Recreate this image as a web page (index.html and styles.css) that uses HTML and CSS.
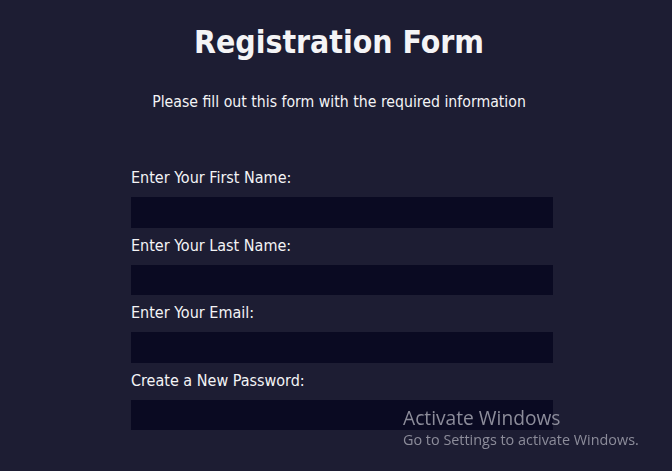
FILE: index.html
```html
<!DOCTYPE html>
<html lang="en">
<head>
<meta charset="utf-8">
<title>Registration Form</title>
<link rel="stylesheet" href="styles.css">
</head>
<body>
<main class="page">
  <h1 class="title">Registration Form</h1>
  <p class="subtitle">Please fill out this form with the required information</p>
  <form class="form">
    <label class="field">
      <span class="label">Enter Your First Name:</span>
      <input class="input" type="text">
    </label>
    <label class="field">
      <span class="label">Enter Your Last Name:</span>
      <input class="input" type="text">
    </label>
    <label class="field">
      <span class="label">Enter Your Email:</span>
      <input class="input" type="email">
    </label>
    <label class="field">
      <span class="label">Create a New Password:</span>
      <input class="input" type="password">
    </label>
  </form>
</main>
<div class="watermark">
  <div class="wm-title">Activate Windows</div>
  <div class="wm-sub">Go to Settings to activate Windows.</div>
</div>
</body>
</html>
```

FILE: styles.css
```css
html, body {
  margin: 0;
  padding: 0;
  background: #1d1d33;
  height: 100%;
  overflow: hidden;
}
body {
  font-family: "DejaVu Sans Condensed", "DejaVu Sans", sans-serif;
  color: #f4f4f6;
}
.page {
  display: flex;
  flex-direction: column;
  align-items: center;
  padding-left: 12px;
}
.title {
  margin: 22px 6px 0 0;
  font-size: 31.7px;
  font-weight: bold;
  line-height: 40px;
}
.subtitle {
  margin: 30px 6px 0 0;
  font-size: 15.7px;
  line-height: 20px;
}
.form {
  width: 422px;
  margin-top: 56px;
  display: flex;
  flex-direction: column;
  gap: 8px;
}
.field {
  display: flex;
  flex-direction: column;
  gap: 9px;
}
.label {
  font-size: 16px;
  line-height: 20px;
}
.input {
  display: block;
  box-sizing: border-box;
  width: 100%;
  height: 30.5px;
  margin: 0;
  border: none;
  background: #0a0a22;
  color: #fff;
  padding: 0 8px;
}
.watermark {
  position: fixed;
  left: 403px;
  top: 405px;
  font-family: "Open Sans", "Noto Sans", sans-serif;
  color: #8c8c9a;
}
.wm-title {
  font-size: 19.2px;
  line-height: 25px;
}
.wm-sub {
  font-size: 14.4px;
  line-height: 19px;
}
```
